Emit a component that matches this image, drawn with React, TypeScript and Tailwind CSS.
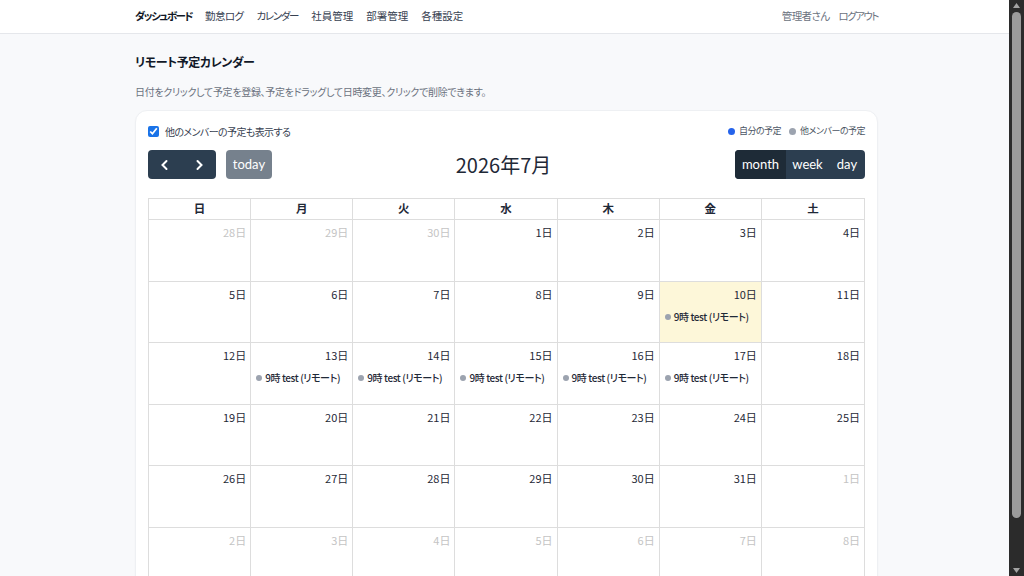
import React from 'react';

const jp = "font-['Noto_Sans_CJK_JP','Noto_Sans',sans-serif] [font-feature-settings:'palt']";

type Day = { n: number; other?: boolean; today?: boolean; ev?: boolean };

const weeks: Day[][] = [
  [{ n: 28, other: true }, { n: 29, other: true }, { n: 30, other: true }, { n: 1 }, { n: 2 }, { n: 3 }, { n: 4 }],
  [{ n: 5 }, { n: 6 }, { n: 7 }, { n: 8 }, { n: 9 }, { n: 10, today: true, ev: true }, { n: 11 }],
  [{ n: 12 }, { n: 13, ev: true }, { n: 14, ev: true }, { n: 15, ev: true }, { n: 16, ev: true }, { n: 17, ev: true }, { n: 18 }],
  [{ n: 19 }, { n: 20 }, { n: 21 }, { n: 22 }, { n: 23 }, { n: 24 }, { n: 25 }],
  [{ n: 26 }, { n: 27 }, { n: 28 }, { n: 29 }, { n: 30 }, { n: 31 }, { n: 1, other: true }],
  [{ n: 2, other: true }, { n: 3, other: true }, { n: 4, other: true }, { n: 5, other: true }, { n: 6, other: true }, { n: 7, other: true }, { n: 8, other: true }],
];

const heads = ['日', '月', '火', '水', '木', '金', '土'];

export default function App() {
  return (
    <div className={`h-screen flex overflow-hidden bg-[#f8f9fb] text-[#1f2937] ${jp}`}>
      <div className="flex-1 min-w-0">
        <header className="bg-white border-b border-[#e5e7eb]">
          <div className="max-w-[747px] mx-auto pl-[4px] pb-[2px] h-[33px] flex items-center justify-between text-[10.5px]">
            <nav className="flex items-center gap-[13px] text-[#374151]">
              <span className="font-bold text-[#111827] tracking-[-1.5px]">ダッシュボード</span>
              <span className="tracking-[-0.6px]">勤怠ログ</span>
              <span className="tracking-[-1.3px]">カレンダー</span>
              <span>社員管理</span>
              <span>部署管理</span>
              <span>各種設定</span>
            </nav>
            <div className="flex items-center gap-[9px] text-[#6b7280]">
              <span className="tracking-[-0.6px]">管理者さん</span>
              <span className="tracking-[-1.5px]">ログアウト</span>
            </div>
          </div>
        </header>

        <main className="max-w-[747px] mx-auto pl-[4px] pt-[17px]">
          <h1 className="text-[12px] font-bold text-[#111827] leading-[22px] tracking-[-0.4px]">リモート予定カレンダー</h1>
          <p className="mt-[11px] text-[10px] text-[#6b7280] leading-[16px] tracking-[-0.3px]">
            日付をクリックして予定を登録、予定をドラッグして日時変更、クリックで削除できます。
          </p>

          <div className="mt-[10px] bg-white border border-[#eef0f3] rounded-xl px-[12px] pt-[12px] pb-6 shadow-[0_1px_2px_rgba(0,0,0,0.03)]">
            <div className="flex items-center justify-between h-[16px]">
              <label className="flex items-center gap-[6px] text-[10px] text-[#374151] tracking-[-0.6px]">
                <input type="checkbox" defaultChecked className="w-[11px] h-[11px] accent-[#1a73e8] m-0" />
                他のメンバーの予定も表示する
              </label>
              <div className="flex items-center gap-[8px] text-[9px] text-[#4b5563] tracking-[-0.5px]">
                <span className="flex items-center gap-[4px]">
                  <span className="w-[7px] h-[7px] rounded-full bg-[#2563eb]" />自分の予定
                </span>
                <span className="flex items-center gap-[4px]">
                  <span className="w-[7px] h-[7px] rounded-full bg-[#9ca3af]" />他メンバーの予定
                </span>
              </div>
            </div>

            <div className="mt-[11px] flex items-center justify-between h-[29px] font-['Lato','Noto_Sans_CJK_JP',sans-serif]">
              <div className="flex items-center gap-[10px]">
                <div className="flex h-[29px] rounded-[4px] overflow-hidden bg-[#2c3e50] text-white">
                  <button className="w-[34px] flex items-center justify-center">
                    <svg width="14" height="14" viewBox="0 0 14 14" fill="none" stroke="white" strokeWidth="2" strokeLinecap="round"><path d="M8.5 3 4.5 7l4 4" /></svg>
                  </button>
                  <button className="w-[34px] flex items-center justify-center">
                    <svg width="14" height="14" viewBox="0 0 14 14" fill="none" stroke="white" strokeWidth="2" strokeLinecap="round"><path d="M5.5 3l4 4-4 4" /></svg>
                  </button>
                </div>
                <button className="h-[29px] w-[46px] rounded-[4px] bg-[#2c3e50]/65 text-white text-[13px]">today</button>
              </div>
              <h2 className={`text-[20px] text-[#1f2937] ${jp}`}>2026年7月</h2>
              <div className="flex h-[29px] rounded-[4px] overflow-hidden bg-[#2c3e50] text-white text-[13px]">
                <button className="w-[51px] bg-[#1e2b37]">month</button>
                <button className="w-[43px]">week</button>
                <button className="w-[36px]">day</button>
              </div>
            </div>

            <div className="mt-[19px] border border-[#dddddd]">
              <div className="grid grid-cols-7 h-[21px] border-b border-[#dddddd]">
                {heads.map((h, i) => (
                  <div key={h} className={`flex items-center justify-center text-[11.5px] font-bold text-[#1f2937] ${i < 6 ? 'border-r border-[#dddddd]' : ''}`}>
                    {h}
                  </div>
                ))}
              </div>
              {weeks.map((w, wi) => (
                <div key={wi} className={`grid grid-cols-7 h-[61.6px] ${wi < weeks.length - 1 ? 'border-b border-[#dddddd]' : ''}`}>
                  {w.map((d, di) => (
                    <div
                      key={di}
                      className={`${di < 6 ? 'border-r border-[#dddddd]' : ''} ${d.today ? 'bg-[#fdf7d9]' : ''} pt-[4px]`}
                    >
                      <div className={`text-right pr-[4px] text-[11px] leading-[16px] ${d.other ? 'text-[#c4c4c4]' : 'text-[#1f2937]'}`}>
                        {d.n}日
                      </div>
                      {d.ev && (
                        <div className="mt-[8px] pl-[5px] flex items-center gap-[3px] text-[10px] font-medium text-[#1f2937] leading-[14px] tracking-[-0.4px]">
                          <span className="w-[6px] h-[6px] rounded-full bg-[#9ca3af]" />
                          <span>9時 test (リモート)</span>
                        </div>
                      )}
                    </div>
                  ))}
                </div>
              ))}
            </div>
          </div>
        </main>
      </div>

      {/* scrollbar strip */}
      <div className="w-[15px] shrink-0 bg-[#2b2b2b] flex flex-col items-center py-[2px]">
        <svg width="9" height="7" viewBox="0 0 9 7"><path d="M4.5 1 8 6H1z" fill="#a3a3a3" /></svg>
        <div className="mt-[3px] w-[9px] h-[506px] rounded-full bg-[#9b9b9b]" />
        <div className="flex-1" />
        <svg width="9" height="7" viewBox="0 0 9 7"><path d="M1 1h7L4.5 6z" fill="#a3a3a3" /></svg>
      </div>
    </div>
  );
}
